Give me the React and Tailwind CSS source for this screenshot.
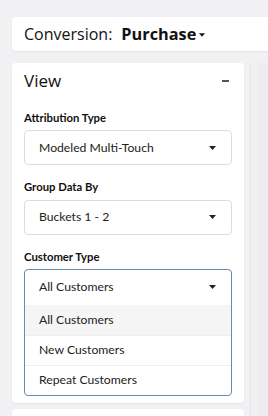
import React from "react";

function Caret({ className = "" }) {
  return (
    <svg width="7" height="4" viewBox="0 0 7 4" className={className}>
      <path d="M0 0h7L3.5 4z" fill="currentColor" />
    </svg>
  );
}

function Select({ value }) {
  return (
    <div className="h-[35px] rounded-[4px] border border-[#dcdcdf] bg-white flex items-center justify-between pl-[14px] pr-[15px]">
      <span className="text-[12.2px] text-[#222]">{value}</span>
      <Caret className="text-[#222]" />
    </div>
  );
}

function Field({ label, children }) {
  return (
    <div>
      <div className="text-[11.3px] font-bold text-[#111] leading-none mb-[7px]">{label}</div>
      {children}
    </div>
  );
}

export default function App() {
  const options = ["All Customers", "New Customers", "Repeat Customers"];
  return (
    <div
      className="w-[268px] h-[416px] overflow-hidden bg-[#f1f1f3] pt-[17px] pl-[12px]"
      style={{ fontFamily: "Lato, 'Noto Sans', sans-serif" }}
    >
      <div
        className="w-[300px] h-[34px] bg-white rounded-[4px] shadow-[0_1px_2px_rgba(0,0,0,0.06)] flex items-center pl-[12px] text-[16px] text-[#111]"
        style={{ fontFamily: "'Open Sans', sans-serif" }}
      >
        <span>Conversion:</span>
        <span className="font-bold ml-[9px] text-[16.3px]">Purchase</span>
        <Caret className="ml-[3px] mt-[2px] w-[6px] h-[4px]" />
      </div>

      <div className="flex mt-[12px] gap-[6px]">
        <div className="w-[232px] shrink-0">
          <div className="bg-white rounded-[4px] shadow-[0_1px_2px_rgba(0,0,0,0.06)] px-[12px] pt-[9px] pb-[7px]">
            <div className="flex items-center justify-between h-[18px]">
              <span className="text-[17px] text-[#111]" style={{ fontFamily: "'Open Sans', sans-serif" }}>
                View
              </span>
              <span className="w-[7px] h-[2px] bg-[#555] mr-[3px]" />
            </div>
            <div className="flex flex-col gap-[16px] mt-[22px]">
              <Field label="Attribution Type">
                <Select value="Modeled Multi-Touch" />
              </Field>
              <Field label="Group Data By">
                <Select value="Buckets 1 - 2" />
              </Field>
              <Field label="Customer Type">
                <div className="rounded-[4px] border border-[#6a8ab0] bg-white overflow-hidden">
                  <div className="h-[35px] flex items-center justify-between pl-[14px] pr-[15px]">
                    <span className="text-[12.2px] text-[#222]">All Customers</span>
                    <Caret className="text-[#222]" />
                  </div>
                  {options.map((o, i) => (
                    <div
                      key={o}
                      className={`h-[30px] flex items-center pl-[14px] text-[12.2px] text-[#222] ${
                        i === 0 ? "bg-[#f5f5f6]" : "border-t border-[#efefef]"
                      }`}
                    >
                      {o}
                    </div>
                  ))}
                </div>
              </Field>
            </div>
          </div>
          <div className="mt-[6px] h-[20px] bg-white rounded-[4px]" />
        </div>
        <div className="w-[1px] bg-[#e6e6e9] shrink-0" />
        <div className="flex-1 bg-[#ededef]" />
      </div>
    </div>
  );
}
